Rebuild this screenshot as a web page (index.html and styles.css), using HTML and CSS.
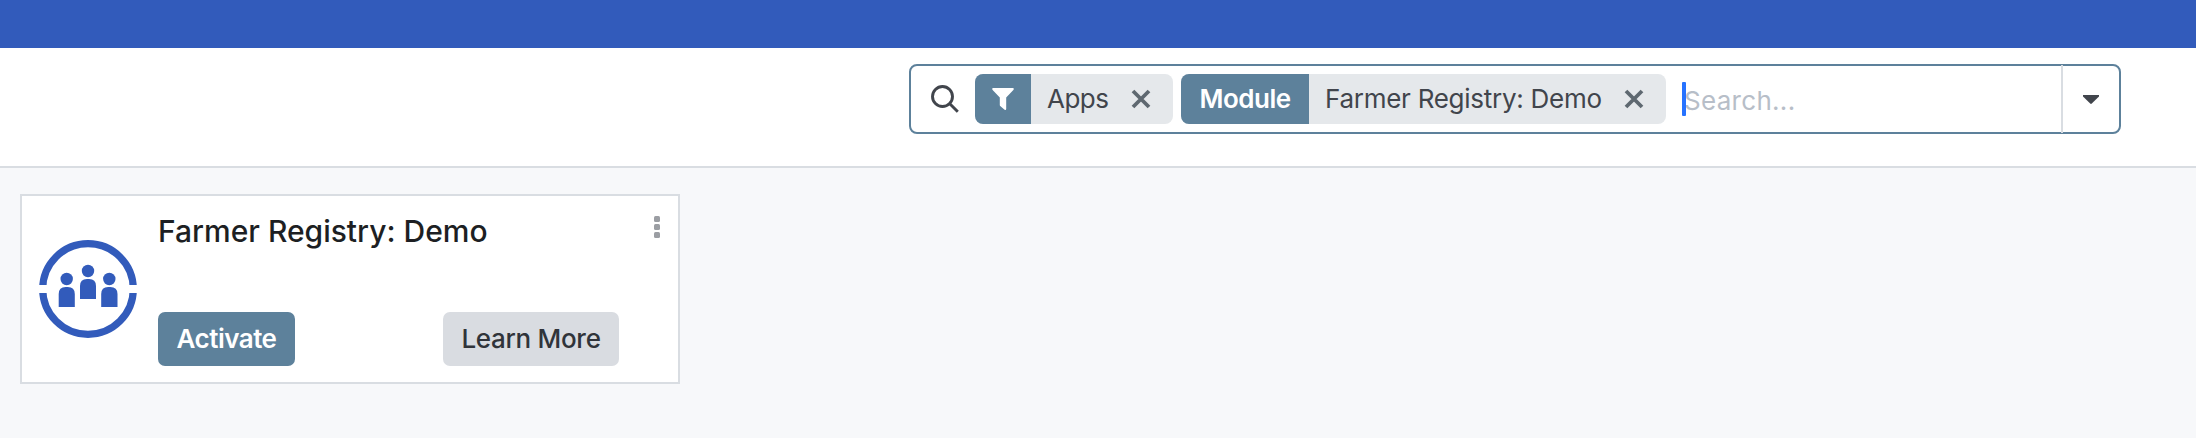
FILE: index.html
```html
<!DOCTYPE html>
<html lang="en">
<head>
<meta charset="utf-8">
<title>Apps</title>
<link rel="stylesheet" href="styles.css">
</head>
<body>
<header class="navbar"></header>
<section class="control-panel">
  <div class="search">
    <svg class="search-icon" viewBox="0 0 28 28"><circle cx="11.5" cy="11.5" r="10"/><path d="M18.5 18.5L26.8 26.8"/></svg>
    <div class="facet facet-filter">
      <span class="facet-label"><svg class="funnel" viewBox="0 0 22 22"><path d="M1 0H21Q22.3 .3 21.6 1.8L14.2 9.4V21Q14 22.5 12.6 21.8L8.2 18Q7.8 17.5 7.8 17V9.4L.4 1.8Q-.3 .3 1 0Z"/></svg></span>
      <span class="facet-value value-apps">Apps</span>
      <svg class="remove" viewBox="0 0 20 20"><path d="M2 2L18 18M18 2L2 18"/></svg>
    </div>
    <div class="facet facet-module">
      <span class="facet-label"><span class="module">Module</span></span>
      <span class="facet-value value-module">Farmer Registry: Demo</span>
      <svg class="remove" viewBox="0 0 20 20"><path d="M2 2L18 18M18 2L2 18"/></svg>
    </div>
    <div class="field"><span class="placeholder">Search...</span><span class="cursor"></span></div>
    <div class="toggle"><svg class="caret" viewBox="0 0 16 9"><path d="M0 0H16V1.4L8.8 8.6Q8 9.3 7.2 8.6L0 1.4Z"/></svg></div>
  </div>
</section>
<main class="content">
  <article class="card">
    <svg class="app-icon" viewBox="0 0 98 98">
      <circle class="ring" cx="49" cy="49" r="45.3"/>
      <path class="gap" d="M-1 45H99V53H-1Z"/>
      <circle cx="27.7" cy="39" r="6.2"/><circle cx="49" cy="31" r="6.2"/><circle cx="70.3" cy="39" r="6.2"/>
      <path d="M19.7 67V54Q19.7 47 26.7 47H28.7Q35.8 47 35.8 54V67ZM41 59V46Q41 39 48 39H50Q57 39 57 46V59ZM62.2 67V54Q62.2 47 69.2 47H71.2Q78.5 47 78.5 54V67Z"/>
    </svg>
    <div class="details">
      <h2 class="title">Farmer Registry: Demo</h2>
      <div class="actions">
        <button class="btn primary">Activate</button>
        <button class="btn secondary">Learn More</button>
      </div>
    </div>
    <div class="menu"><i class="dot"></i><i class="dot"></i><i class="dot"></i></div>
  </article>
</main>
</body>
</html>
```
FILE: styles.css
```css
* { box-sizing: border-box; }
body { margin: 0; height: 438px; overflow: hidden; background: #f7f8fa; font: 26px/1 Inter, "Noto Sans", sans-serif; color: #41454c; white-space: nowrap; }
svg { display: block; flex: none; overflow: visible; }
.navbar { height: 48px; background: #325bbb; }
.control-panel { display: flex; justify-content: flex-end; height: 120px; padding: 16px 75px 0 0; background: #fff; border-bottom: 2px solid #d9dde2; }
.search { display: flex; align-items: center; width: 1212px; height: 70px; padding-left: 20px; border: 2px solid #5d819b; border-radius: 8px; }
.search-icon { width: 28px; height: 28px; margin-right: 16px; fill: none; stroke: #41454c; stroke-width: 2.9; }
.facet { display: flex; align-items: center; height: 50px; overflow: hidden; margin-right: 8px; border-radius: 8px; background: #e5e8eb; }
.facet-filter { width: 198px; }
.facet-module { width: 485px; }
.facet-label { display: flex; align-items: center; justify-content: center; width: 56px; height: 50px; flex: none; background: #5d819b; color: #fff; font-weight: 600; }
.facet-module .facet-label { width: 128px; }
.module { letter-spacing: -.5px; }
.funnel { width: 22px; height: 22px; fill: #fff; }
.facet-value { flex: none; padding-left: 16px; }
.value-apps { width: 100px; letter-spacing: -.5px; }
.value-module { width: 315px; letter-spacing: -.27px; }
.remove { width: 20px; height: 20px; fill: none; stroke: #5e6870; stroke-width: 3.8; }
.field { position: relative; flex: 1; padding: 3px 0 0 10px; color: #b7bec8; letter-spacing: .3px; }
.cursor { position: absolute; left: 8px; top: -3px; width: 4px; height: 34px; border-radius: 1px; background: #2672ff; }
.toggle { display: flex; align-items: center; justify-content: center; width: 58px; height: 68px; border-left: 2px solid #d9dde2; }
.caret { width: 16px; height: 9px; margin-top: 1px; fill: #41454c; }
.content { padding: 26px 20px; }
.card { display: flex; width: 660px; height: 190px; padding-left: 17px; background: #fff; border: 2px solid #d9dde2; }
.app-icon { width: 98px; height: 98px; margin: 44px 21px 0 0; fill: #325bbb; }
.ring { fill: none; stroke: #325bbb; stroke-width: 7.2; }
.gap { fill: #fff; }
.details { width: 461px; padding-top: 20px; }
.title { margin: 0 0 66px; font-size: 30px; line-height: 30px; font-weight: 500; color: #1d1f23; }
.actions { display: flex; justify-content: space-between; }
.btn { height: 54px; padding: 0; border: 0; border-radius: 7px; font: 500 26px/54px Inter, "Noto Sans", sans-serif; }
.primary { width: 137px; background: #5d819b; color: #fff; font-weight: 600; letter-spacing: -.5px; }
.secondary { width: 176px; background: #d9dce1; color: #30343a; letter-spacing: -.3px; }
.menu { display: flex; flex-direction: column; gap: 2px; margin: 20px 0 0 35px; }
.dot { width: 6px; height: 6px; border-radius: 1.5px; background: #9b9ea3; }
```
